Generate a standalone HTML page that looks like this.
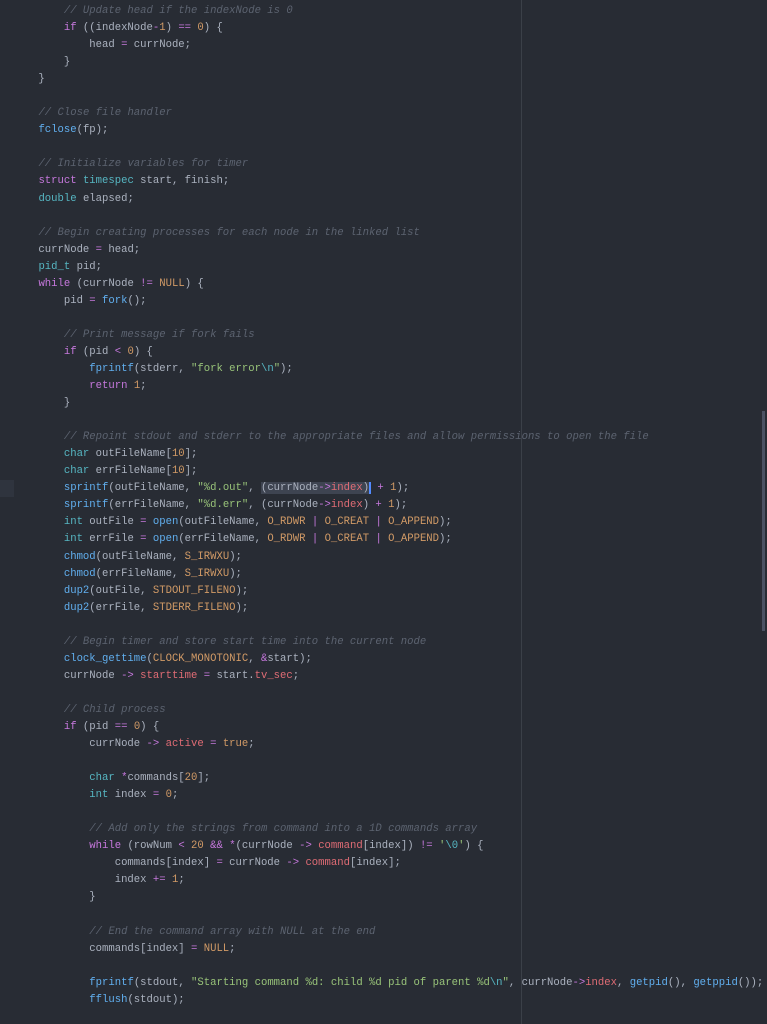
<!DOCTYPE html>
<html><head><meta charset="utf-8"><style>
html,body{margin:0;padding:0;background:#282c34;width:767px;height:1024px;overflow:hidden;}
#code{position:absolute;left:13px;top:3px;font-family:"Liberation Mono",monospace;font-size:10.6px;line-height:17.05px;color:#abb2bf;white-space:pre;}
.c{color:#5c6370;font-style:italic}
.k{color:#c678dd}
.t{color:#56b6c2}
.f{color:#61afef}
.n{color:#d19a66}
.s{color:#98c379}
.e{color:#56b6c2}
.p{color:#e06c75}
.o{color:#c678dd}
.sel{background:#3e4451;border-right:2px solid #528bff}
#rule{position:absolute;left:521px;top:0;width:1px;height:1024px;background:#3b4048}
#sb{position:absolute;left:762px;top:411px;width:3px;height:220px;background:#4b5263}
#hl{position:absolute;left:0;top:480px;width:14px;height:17px;background:#2f343e}
</style></head><body>
<div id="rule"></div><div id="sb"></div><div id="hl"></div>
<div id="code">        <span class="c">// Update head if the indexNode is 0</span>
        <span class="k">if</span> ((indexNode<span class="o">-</span><span class="n">1</span>) <span class="o">==</span> <span class="n">0</span>) {
            head <span class="o">=</span> currNode;
        }
    }

    <span class="c">// Close file handler</span>
    <span class="f">fclose</span>(fp);

    <span class="c">// Initialize variables for timer</span>
    <span class="k">struct</span> <span class="t">timespec</span> start, finish;
    <span class="t">double</span> elapsed;

    <span class="c">// Begin creating processes for each node in the linked list</span>
    currNode <span class="o">=</span> head;
    <span class="t">pid_t</span> pid;
    <span class="k">while</span> (currNode <span class="o">!=</span> <span class="n">NULL</span>) {
        pid <span class="o">=</span> <span class="f">fork</span>();

        <span class="c">// Print message if fork fails</span>
        <span class="k">if</span> (pid <span class="o">&lt;</span> <span class="n">0</span>) {
            <span class="f">fprintf</span>(stderr, <span class="s">"fork error<span class="e">\n</span>"</span>);
            <span class="k">return</span> <span class="n">1</span>;
        }

        <span class="c">// Repoint stdout and stderr to the appropriate files and allow permissions to open the file</span>
        <span class="t">char</span> outFileName[<span class="n">10</span>];
        <span class="t">char</span> errFileName[<span class="n">10</span>];
        <span class="f">sprintf</span>(outFileName, <span class="s">"%d.out"</span>, <span class="sel">(currNode<span class="o">-&gt;</span><span class="p">index</span>)</span> <span class="o">+</span> <span class="n">1</span>);
        <span class="f">sprintf</span>(errFileName, <span class="s">"%d.err"</span>, (currNode<span class="o">-&gt;</span><span class="p">index</span>) <span class="o">+</span> <span class="n">1</span>);
        <span class="t">int</span> outFile <span class="o">=</span> <span class="f">open</span>(outFileName, <span class="n">O_RDWR</span> <span class="o">|</span> <span class="n">O_CREAT</span> <span class="o">|</span> <span class="n">O_APPEND</span>);
        <span class="t">int</span> errFile <span class="o">=</span> <span class="f">open</span>(errFileName, <span class="n">O_RDWR</span> <span class="o">|</span> <span class="n">O_CREAT</span> <span class="o">|</span> <span class="n">O_APPEND</span>);
        <span class="f">chmod</span>(outFileName, <span class="n">S_IRWXU</span>);
        <span class="f">chmod</span>(errFileName, <span class="n">S_IRWXU</span>);
        <span class="f">dup2</span>(outFile, <span class="n">STDOUT_FILENO</span>);
        <span class="f">dup2</span>(errFile, <span class="n">STDERR_FILENO</span>);

        <span class="c">// Begin timer and store start time into the current node</span>
        <span class="f">clock_gettime</span>(<span class="n">CLOCK_MONOTONIC</span>, <span class="o">&amp;</span>start);
        currNode <span class="o">-&gt;</span> <span class="p">starttime</span> <span class="o">=</span> start.<span class="p">tv_sec</span>;

        <span class="c">// Child process</span>
        <span class="k">if</span> (pid <span class="o">==</span> <span class="n">0</span>) {
            currNode <span class="o">-&gt;</span> <span class="p">active</span> <span class="o">=</span> <span class="n">true</span>;

            <span class="t">char</span> <span class="o">*</span>commands[<span class="n">20</span>];
            <span class="t">int</span> index <span class="o">=</span> <span class="n">0</span>;

            <span class="c">// Add only the strings from command into a 1D commands array</span>
            <span class="k">while</span> (rowNum <span class="o">&lt;</span> <span class="n">20</span> <span class="o">&amp;&amp;</span> <span class="o">*</span>(currNode <span class="o">-&gt;</span> <span class="p">command</span>[index]) <span class="o">!=</span> <span class="s">'<span class="e">\0</span>'</span>) {
                commands[index] <span class="o">=</span> currNode <span class="o">-&gt;</span> <span class="p">command</span>[index];
                index <span class="o">+=</span> <span class="n">1</span>;
            }

            <span class="c">// End the command array with NULL at the end</span>
            commands[index] <span class="o">=</span> <span class="n">NULL</span>;

            <span class="f">fprintf</span>(stdout, <span class="s">"Starting command %d: child %d pid of parent %d<span class="e">\n</span>"</span>, currNode<span class="o">-&gt;</span><span class="p">index</span>, <span class="f">getpid</span>(), <span class="f">getppid</span>());
            <span class="f">fflush</span>(stdout);
</div>
</body></html>
